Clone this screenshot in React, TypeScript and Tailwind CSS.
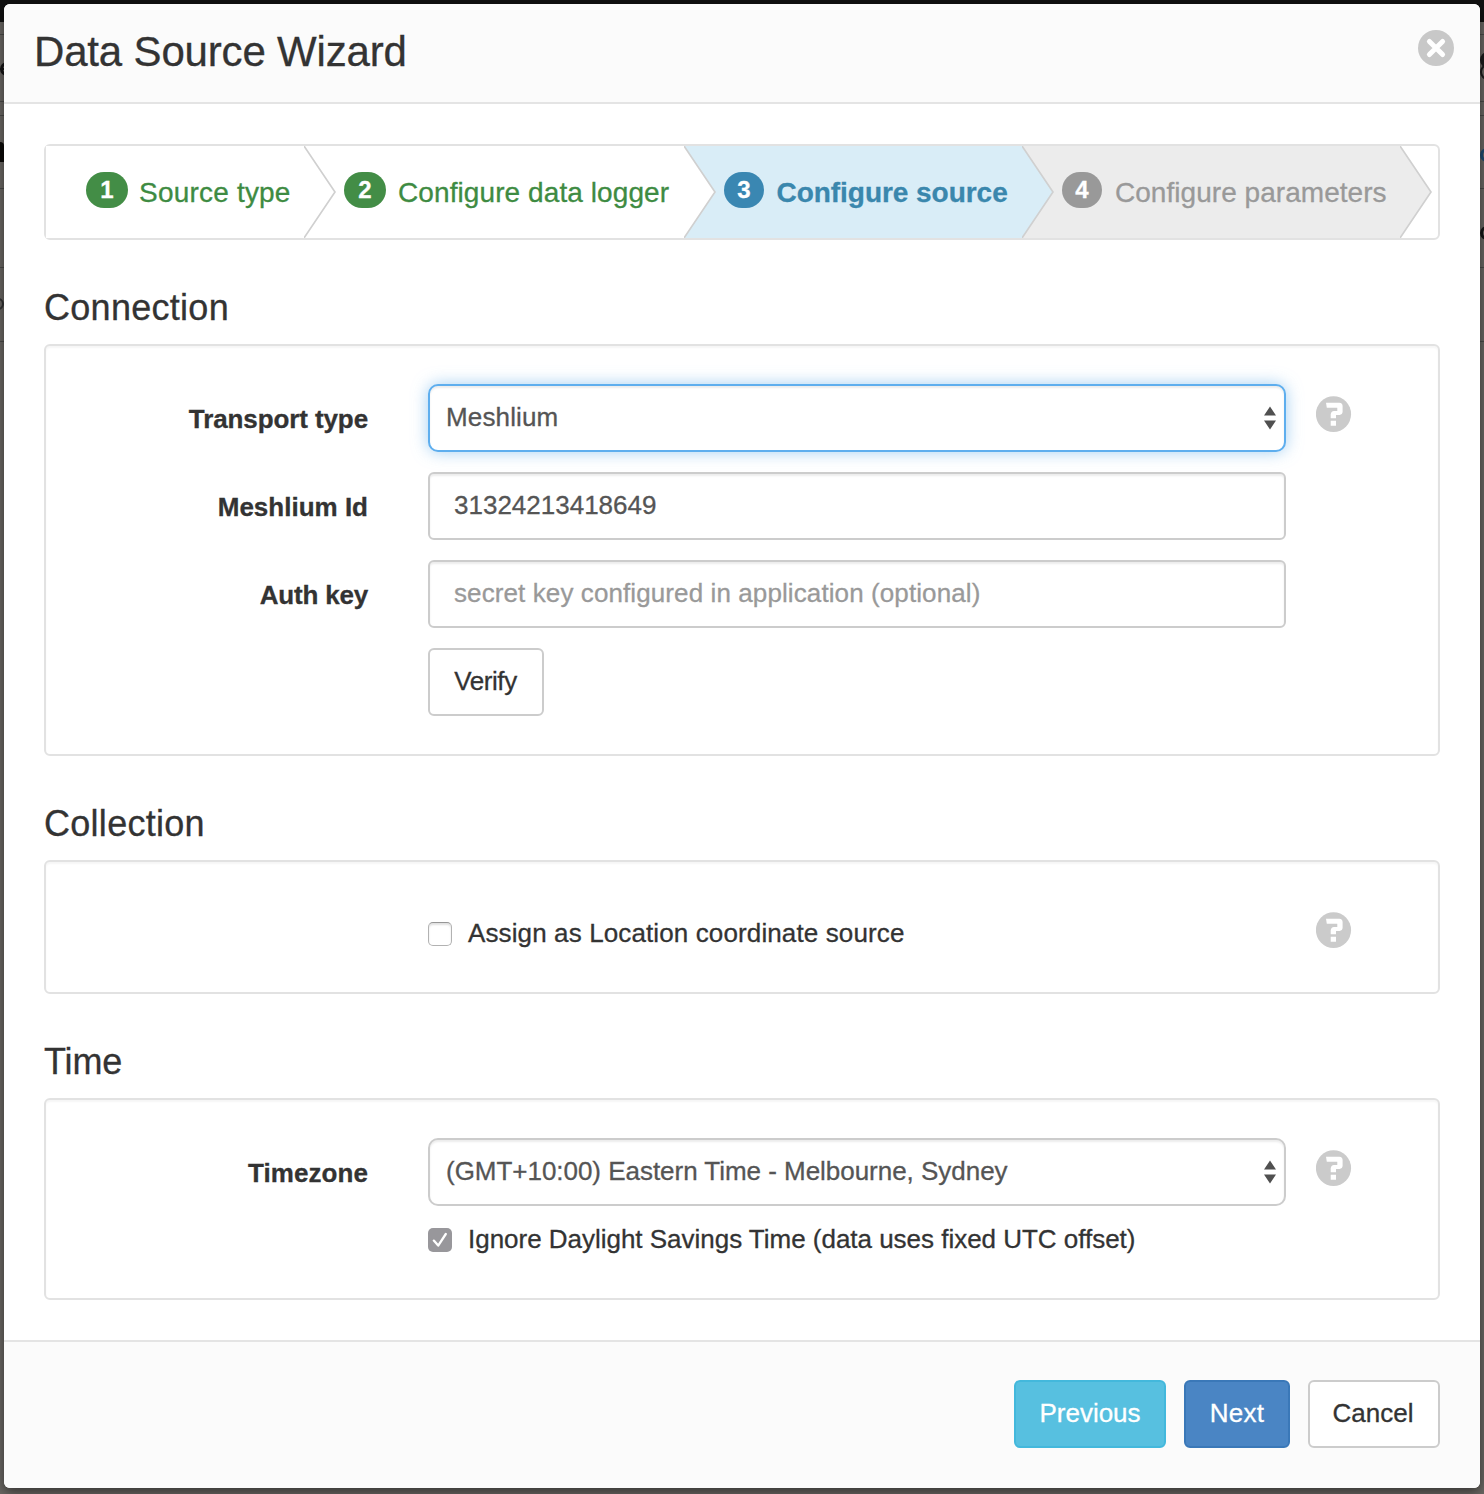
import type { ReactNode } from "react";
import clsx from "clsx";

const steps = [
  {
    n: 1,
    label: "Source type",
    li: "w-[258px] z-40 bg-white text-[#3e8b42] gap-[11px]",
    text: "tracking-[0.2px]",
    badge: "w-[42px] bg-[#438d46]",
    arrow: "fill-white",
  },
  {
    n: 2,
    label: "Configure data logger",
    li: "w-[380px] z-30 bg-white text-[#3e8b42] gap-[12px]",
    text: "tracking-[0.09px]",
    badge: "w-[42px] bg-[#438d46]",
    arrow: "fill-white",
  },
  {
    n: 3,
    label: "Configure source",
    li: "w-[338px] z-20 bg-[#d9edf7] text-[#3a87ad] gap-[12.5px]",
    text: "font-bold tracking-[-0.04px]",
    badge: "w-10 bg-[#3a87b2]",
    arrow: "fill-[#d9edf7]",
  },
  {
    n: 4,
    label: "Configure parameters",
    li: "w-[378px] z-10 bg-[#ececec] text-[#999] gap-[13px]",
    text: "tracking-[0.04px]",
    badge: "w-10 bg-[#999]",
    arrow: "fill-[#ececec]",
  },
];

function Steps() {
  return (
    <ol className="flex h-24 rounded-md border-2 border-[#e2e2e2] bg-white">
      {steps.map((s) => (
        <li key={s.n} className={clsx("relative flex h-[92px] items-center pl-10 text-[28px] leading-8", s.li)}>
          <span
            className={clsx(
              "-mt-1 flex h-9 shrink-0 items-center justify-center rounded-[18px] text-2xl leading-none font-bold text-white",
              s.badge,
            )}
          >
            {s.n}
          </span>
          <span className={clsx("mt-0.5 whitespace-nowrap", s.text)}>{s.label}</span>
          <svg className="absolute top-0 left-full h-[92px] w-8" viewBox="0 0 32 92">
            <path d="M-1 0H0L31 46L0 92H-1Z" className={s.arrow} />
            <path d="M0 0L31 46L0 92" fill="none" stroke="#d0d0d0" strokeWidth="1.7" />
          </svg>
        </li>
      ))}
    </ol>
  );
}

function HelpIcon() {
  return (
    <svg className="mt-3 ml-[30px] h-9 w-9 shrink-0" viewBox="0 0 36 36">
      <ellipse cx="17.5" cy="18.1" rx="17.6" ry="17.9" fill="#cbcbcb" />
      <path
        fill="#fff"
        d="M10 6.8H23.4Q26.6 7 26.6 10V15.8Q26.4 18.6 23.6 19H20V22.3H14.7V18.2Q15 15.2 18 14.9H21.3V11.7H10.8ZM14.7 24.8H20V29.7H14.7Z"
      />
    </svg>
  );
}

function Panel({ title, titleClass, className, children }: { title: string; titleClass?: string; className: string; children: ReactNode }) {
  return (
    <section className="mt-12">
      <h2 className={clsx("mb-4 h-10 text-4xl leading-[39px]", titleClass)}>{title}</h2>
      <div className={clsx("rounded-md border-2 border-[#e2e2e2] pt-[38px] shadow-[inset_0_2px_2px_rgba(0,0,0,0.04)]", className)}>
        {children}
      </div>
    </section>
  );
}

function Row({ label, labelClass, help, children }: { label?: string; labelClass?: string; help?: boolean; children: ReactNode }) {
  return (
    <div className="flex h-[68px]">
      <label className={clsx("mr-[60px] w-[322px] shrink-0 text-right font-bold leading-[70px]", labelClass)}>{label}</label>
      <div className="w-[858px] shrink-0">{children}</div>
      {help && <HelpIcon />}
    </div>
  );
}

function Select({ value, focused, textClass }: { value: string; focused?: boolean; textClass?: string }) {
  return (
    <button
      className={clsx(
        "flex h-[68px] w-full items-center justify-between rounded-[10px] border-2 bg-white pr-2 pb-0.5 pl-4 text-[#555]",
        focused
          ? "border-[#5eaeee] shadow-[inset_0_2px_2px_rgba(0,0,0,0.075),0_0_16px_rgba(102,175,233,0.6)]"
          : "border-[#ccc] shadow-[inset_0_2px_2px_rgba(0,0,0,0.075)]",
      )}
    >
      <span className={textClass}>{value}</span>
      <svg className="mt-0.5 h-6 w-3" viewBox="0 0 12 24">
        <path d="M6 0.5L12 9.5H0ZM0 14.5H12L6 23.5Z" fill="#505050" />
      </svg>
    </button>
  );
}

const field =
  "block h-[68px] w-full rounded-md border-2 border-[#ccc] bg-white pb-0.5 px-6 text-[#555] shadow-[inset_0_2px_2px_rgba(0,0,0,0.075)] outline-none placeholder:text-[#999]";
const button = "h-[68px] rounded-md border-2 pb-0.5 text-center";

function Backdrop() {
  return (
    <div aria-hidden="true" className="absolute inset-0 overflow-hidden bg-[#6a6763]">
      <div className="h-[22px] bg-[#111]" />
      <div className="absolute top-[34px] h-px w-full bg-[#4a4a48]" />
      <div className="absolute top-[101px] h-px w-full bg-[#4a4a48]" />
      <div className="absolute top-[115px] h-px w-full bg-[#4a4a48]" />
      <div className="absolute top-[188px] h-px w-full bg-[#4a4a48]" />
      <div className="absolute top-[267px] h-px w-full bg-[#4a4a48]" />
      <div className="absolute top-[341px] h-px w-full bg-[#4a4a48]" />
      <div className="absolute top-[142px] left-0 h-5 w-1 rounded-tr bg-[#0c0a08]" />
      <div className="absolute top-[62px] left-0 size-3.5 rounded-full border-[3px] border-[#151515]" />
      <div className="absolute top-[68px] left-0 h-0.5 w-1 bg-[#151515]" />
      <div className="absolute top-[298px] -left-2 size-3 rounded-full border-2 border-[#333]" />
      <div className="absolute top-[52px] -right-3 h-4 w-4 rounded-full bg-[#1b1b1b]" />
      <div className="absolute top-[64px] -right-3 size-4 rounded-full border-2 border-[#1b1b1b]" />
      <div className="absolute top-[148px] -right-2.5 size-3.5 rounded-full border-[3px] border-[#1f4a70]" />
      <div className="absolute top-[226px] -right-2.5 size-3.5 rounded-full border-[3px] border-[#151515]" />
    </div>
  );
}

export default function App() {
  return (
    <div className="relative h-[1494px] w-[1484px] overflow-hidden p-1 font-['Liberation_Sans',Arial,sans-serif] text-[26px] leading-8 text-[#333] [-webkit-text-stroke:0.3px]">
      <Backdrop />
      <div className="relative flex h-[1484px] flex-col overflow-hidden rounded-md bg-white shadow-[0_4px_12px_rgba(0,0,0,0.5)]">
        <header className="flex h-[100px] shrink-0 justify-between border-b-2 border-[#e4e4e4] bg-[#fbfbfb] pr-[26px] pl-[30px]">
          <h1 className="text-[42px] leading-[95px] tracking-[-0.17px]">Data Source Wizard</h1>
          <button aria-label="Close" className="mt-[26px] h-9 w-9">
            <svg className="block h-9 w-9" viewBox="0 0 36 36">
              <circle cx="18" cy="18" r="18" fill="#c8c8c8" />
              <path d="M11.4 11.4L24.6 24.6M24.6 11.4L11.4 24.6" stroke="#fff" strokeWidth="5" strokeLinecap="round" />
            </svg>
          </button>
        </header>

        <main className="flex-1 px-10 pt-10">
          <Steps />

          <Panel title="Connection" titleClass="tracking-[0.28px]" className="flex flex-col gap-5 pb-[38px]">
            <Row label="Transport type" labelClass="tracking-[-0.1px]" help>
              <Select value="Meshlium" focused textClass="tracking-[0.14px]" />
            </Row>
            <Row label="Meshlium Id">
              <input className={field} defaultValue="31324213418649" />
            </Row>
            <Row label="Auth key" labelClass="tracking-[-0.2px]">
              <input className={clsx(field, "tracking-[0.1px]")} placeholder="secret key configured in application (optional)" />
            </Row>
            <Row>
              <button className={clsx(button, "w-[116px] border-[#ccc] bg-white pr-px tracking-[-0.41px]")}>Verify</button>
            </Row>
          </Panel>

          <Panel title="Collection" titleClass="tracking-[0.28px]" className="pb-6">
            <Row help>
              <div className="flex h-[68px] items-center gap-4">
                <span className="size-6 rounded-[5px] border border-[#b2b2b2] border-t-[#969696] bg-white shadow-[inset_0_2px_2px_rgba(0,0,0,0.12)]" />
                <span className="-mt-0.5 tracking-[0.12px]">Assign as Location coordinate source</span>
              </div>
            </Row>
          </Panel>

          <Panel title="Time" titleClass="tracking-[-0.1px]" className="pb-6">
            <Row label="Timezone" labelClass="tracking-[0.07px]" help>
              <Select value="(GMT+10:00) Eastern Time - Melbourne, Sydney" textClass="tracking-[-0.03px]" />
            </Row>
            <Row>
              <div className="flex h-[68px] items-center gap-4">
                <svg className="size-6 rounded-[5px] bg-[#98979b]" viewBox="0 0 24 24">
                  <path d="M5.8 12.6L10.2 17.6L17.8 6" fill="none" stroke="#fff" strokeWidth="2.3" strokeLinecap="round" strokeLinejoin="round" />
                </svg>
                <span className="-mt-0.5 tracking-[-0.02px]">Ignore Daylight Savings Time (data uses fixed UTC offset)</span>
              </div>
            </Row>
          </Panel>
        </main>

        <footer className="flex h-[148px] shrink-0 justify-end border-t-2 border-[#e4e4e4] bg-[#fbfbfb] pt-[38px] pr-10">
          <button className={clsx(button, "mr-[18px] w-[152px] border-[#43b8dc] bg-[#57c0e0] text-white")}>Previous</button>
          <button className={clsx(button, "mr-[18px] w-[106px] border-[#3a78b8] bg-[#4a85c4] tracking-[0.25px] text-white")}>Next</button>
          <button className={clsx(button, "w-[132px] border-[#ccc] bg-white pr-0.5")}>Cancel</button>
        </footer>
      </div>
    </div>
  );
}
